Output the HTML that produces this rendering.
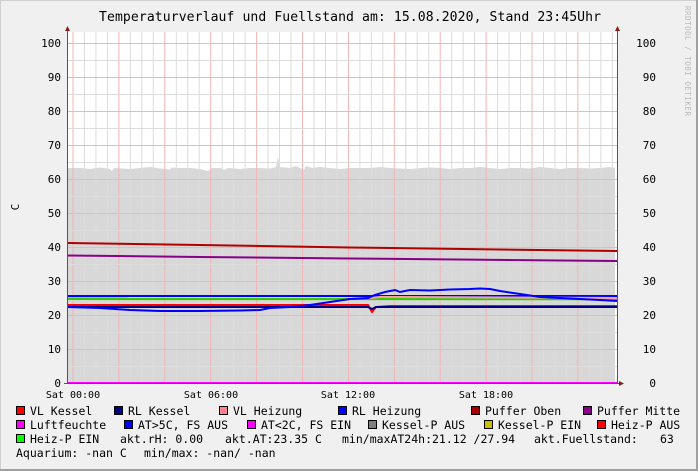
<!DOCTYPE html>
<html><head><meta charset="utf-8"><style>
html,body{margin:0;padding:0;background:#f0f0f0}
svg{display:block}
text{font-family:"DejaVu Sans Mono","Liberation Mono",monospace}
</style></head><body>
<svg width="698" height="471" viewBox="0 0 698 471" xmlns="http://www.w3.org/2000/svg">
<defs>
<pattern id="gv" x="72.5" y="0" width="45.9" height="10" patternUnits="userSpaceOnUse">
<line x1="0.5" y1="0" x2="0.5" y2="10" stroke="#f2b4b4" stroke-width="1"/>
<line x1="12" y1="0" x2="12" y2="10" stroke="#dcdcdc" stroke-width="1"/>
<line x1="23.45" y1="0" x2="23.45" y2="10" stroke="#dcdcdc" stroke-width="1"/>
<line x1="34.9" y1="0" x2="34.9" y2="10" stroke="#dcdcdc" stroke-width="1"/>
</pattern>
<pattern id="gh" x="0" y="43" width="10" height="34" patternUnits="userSpaceOnUse">
<line x1="0" y1="0.5" x2="10" y2="0.5" stroke="#f2b4b4" stroke-width="1"/>
<line x1="0" y1="17.5" x2="10" y2="17.5" stroke="#dcdcdc" stroke-width="1"/>
</pattern>
</defs>
<rect x="0" y="0" width="698" height="471" fill="#f0f0f0"/>
<rect x="0.5" y="0.5" width="696" height="469" fill="none" stroke="#d0d0d0"/>
<line x1="697" y1="0" x2="697" y2="471" stroke="#a0a0a0" stroke-width="2"/>
<line x1="0" y1="470" x2="698" y2="470" stroke="#a0a0a0" stroke-width="2"/>
<text x="350" y="21" font-size="13.1" text-anchor="middle" fill="#000" textLength="502">Temperaturverlauf und Fuellstand am: 15.08.2020, Stand 23:45Uhr</text>
<text transform="translate(685,6) rotate(90)" font-size="7.5" fill="#bbb" textLength="110">RRDTOOL / TOBI OETIKER</text>
<text transform="translate(19,207) rotate(-90)" font-size="11" text-anchor="middle" fill="#000">C</text>
<rect x="68" y="32" width="549" height="351" fill="#fff"/>
<path d="M68,168 L80,168 L90,169 L100,167.5 L110,169 L112,171 L114,168 L130,169 L140,168 L150,167 L160,168.5 L170,169.5 L172,167.5 L180,168 L190,168 L200,169 L208,171 L212,168 L220,168 L224,170 L228,168 L240,169 L250,168 L260,168 L270,168.5 L276,167 L278,157 L280,167 L290,168 L296,166 L300,168 L304,170 L306,166 L312,168 L320,167 L330,168 L340,169 L350,168 L360,168 L370,168 L380,167 L390,168 L400,168.5 L410,169 L420,168 L430,167.5 L440,168 L450,169 L460,168 L470,168 L480,167 L490,168 L500,169 L510,168 L520,168 L530,168.5 L540,167 L550,168 L560,169 L570,168 L580,168 L590,168.5 L600,168 L610,167 L615,168 L615,383 L68,383 Z" fill="#d8d8d8"/>
<rect x="68" y="32" width="549" height="351" fill="url(#gv)"/>
<rect x="68" y="32" width="549" height="351" fill="url(#gh)"/>
<path d="M68,243 L200,245 L350,247.5 L617,251" stroke="#b00000" stroke-width="2" fill="none"/>
<path d="M68,255.5 L200,257 L350,258.5 L617,261" stroke="#880088" stroke-width="2" fill="none"/>
<path d="M68,296 L617,296" stroke="#0000ff" stroke-width="2" fill="none"/>
<path d="M68,298.8 L617,299" stroke="#33cc00" stroke-width="2.5" fill="none"/>
<path d="M68,305 L368,305 L372,312 L376,307 L390,306 L617,306" stroke="#ff0000" stroke-width="2" fill="none"/>
<path d="M68,307 L368,307 L372,309 L376,307 L617,307" stroke="#000080" stroke-width="2" fill="none"/>
<path d="M370,298 L380,297 L400,297 L617,298" stroke="#ffa0a0" stroke-width="2" fill="none"/>
<path d="M68,307 L100,308 L130,310 L160,311 L200,311 L240,310.5 L260,310 L270,308 L290,307 L310,305 L330,302 L350,299 L368,298 L375,295 L385,292 L395,290 L400,292 L410,290 L430,290.5 L450,289.5 L470,289 L480,288.5 L490,289 L500,291 L520,294 L540,297 L560,298 L580,299 L600,300 L617,301" stroke="#0000ff" stroke-width="2" fill="none"/>
<path d="M68,383 L617,383" stroke="#ff00ff" stroke-width="2" fill="none"/>
<line x1="67.5" y1="30" x2="67.5" y2="384" stroke="#555" stroke-width="1"/>
<line x1="617.5" y1="30" x2="617.5" y2="384" stroke="#555" stroke-width="1"/>
<line x1="64" y1="383.5" x2="620" y2="383.5" stroke="#555" stroke-width="1"/>
<path d="M65,31 L70,31 L67.5,26 Z" fill="#8b1a1a"/>
<path d="M615,31 L620,31 L617.5,26 Z" fill="#8b1a1a"/>
<path d="M619,381 L619,386 L624,383.5 Z" fill="#8b1a1a"/>
<g font-size="11" fill="#000" text-anchor="end">
<text x="61" y="47">100</text><text x="61" y="81">90</text><text x="61" y="115">80</text><text x="61" y="149">70</text><text x="61" y="183">60</text><text x="61" y="217">50</text><text x="61" y="251">40</text><text x="61" y="285">30</text><text x="61" y="319">20</text><text x="61" y="353">10</text><text x="61" y="387">0</text>
</g>
<g font-size="11" fill="#000" text-anchor="end">
<text x="656" y="47">100</text><text x="656" y="81">90</text><text x="656" y="115">80</text><text x="656" y="149">70</text><text x="656" y="183">60</text><text x="656" y="217">50</text><text x="656" y="251">40</text><text x="656" y="285">30</text><text x="656" y="319">20</text><text x="656" y="353">10</text><text x="656" y="387">0</text>
</g>
<g font-size="10" fill="#000" text-anchor="middle">
<text x="73" y="398">Sat 00:00</text><text x="211" y="398">Sat 06:00</text><text x="348" y="398">Sat 12:00</text><text x="486" y="398">Sat 18:00</text>
</g>
<g stroke="#000" stroke-width="1">
<rect x="16.5" y="406.5" width="8" height="8" fill="#ff0000"/>
<rect x="114.5" y="406.5" width="8" height="8" fill="#000080"/>
<rect x="219.5" y="406.5" width="8" height="8" fill="#ff8090"/>
<rect x="338.5" y="406.5" width="8" height="8" fill="#0000ff"/>
<rect x="471.5" y="406.5" width="8" height="8" fill="#aa0000"/>
<rect x="583.5" y="406.5" width="8" height="8" fill="#880088"/>
<rect x="16.5" y="420.5" width="8" height="8" fill="#ff00ff"/>
<rect x="124.5" y="420.5" width="8" height="8" fill="#0000ff"/>
<rect x="247.5" y="420.5" width="8" height="8" fill="#ff00ff"/>
<rect x="368.5" y="420.5" width="8" height="8" fill="#808080"/>
<rect x="484.5" y="420.5" width="8" height="8" fill="#c8c000"/>
<rect x="597.5" y="420.5" width="8" height="8" fill="#ff0000"/>
<rect x="16.5" y="434.5" width="8" height="8" fill="#00ff00"/>
</g>
<g font-size="11.5" fill="#000">
<text x="30" y="415">VL Kessel</text>
<text x="128" y="415">RL Kessel</text>
<text x="233" y="415">VL Heizung</text>
<text x="352" y="415">RL Heizung</text>
<text x="485" y="415">Puffer Oben</text>
<text x="597" y="415">Puffer Mitte</text>
<text x="30" y="429">Luftfeuchte</text>
<text x="138" y="429">AT&gt;5C, FS AUS</text>
<text x="261" y="429">AT&lt;2C, FS EIN</text>
<text x="382" y="429">Kessel-P AUS</text>
<text x="498" y="429">Kessel-P EIN</text>
<text x="611" y="429">Heiz-P AUS</text>
<text x="30" y="443">Heiz-P EIN</text>
<text x="120" y="443">akt.rH: 0.00</text>
<text x="225" y="443">akt.AT:23.35 C</text>
<text x="342" y="443">min/maxAT24h:21.12 /27.94</text>
<text x="534" y="443">akt.Fuellstand:</text>
<text x="660" y="443">63</text>
<text x="16" y="457">Aquarium: -nan C</text>
<text x="144" y="457">min/max: -nan/ -nan</text>
</g>
</svg>
</body></html>
